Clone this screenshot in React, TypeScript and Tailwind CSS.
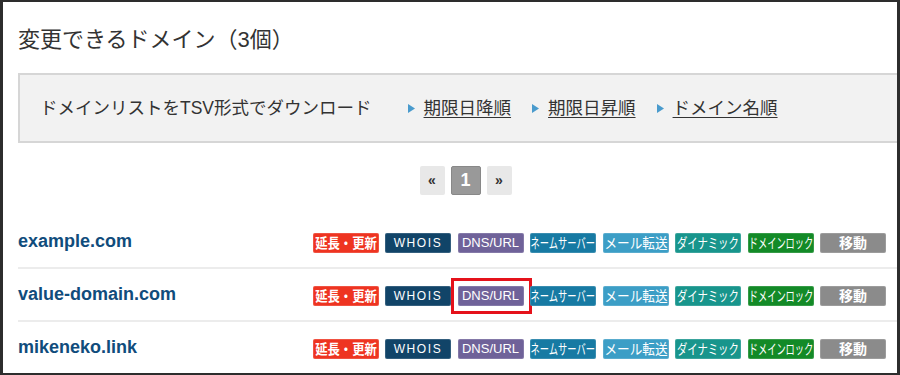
const FONT = '"Liberation Sans", "Noto Sans CJK JP", sans-serif';

type Badge = { label: string; bg: string; text: string };

const badges: Badge[] = [
  { label: '延長・更新', bg: 'bg-[#ee3421]', text: 'text-[14px] font-bold scale-x-[0.88]' },
  { label: 'WHOIS', bg: 'bg-[#114468]', text: 'text-[12px] tracking-[1.6px]' },
  { label: 'DNS/URL', bg: 'bg-[#6f6299]', text: 'text-[13px]' },
  { label: 'ネームサーバー', bg: 'bg-[#177aa3]', text: 'text-[14px] scale-x-[0.66]' },
  { label: 'メール転送', bg: 'bg-[#3c9ec6]', text: 'text-[14px] scale-x-[0.9]' },
  { label: 'ダイナミック', bg: 'bg-[#18958c]', text: 'text-[14px] scale-x-[0.74]' },
  { label: 'ドメインロック', bg: 'bg-[#138a27]', text: 'text-[14px] scale-x-[0.66]' },
  { label: '移動', bg: 'bg-[#8b8b8b]', text: 'text-[14px] font-bold' },
];

const domains = ['example.com', 'value-domain.com', 'mikeneko.link'];

function Triangle() {
  return (
    <svg width="7" height="9" viewBox="0 0 7 9" className="shrink-0">
      <polygon points="0,0 7,4.5 0,9" fill="#4a9bcd" />
    </svg>
  );
}

function SortLink({ label, first }: { label: string; first?: boolean }) {
  return (
    <div className={`flex items-center gap-[9px] ${first ? 'ml-[36px]' : 'ml-[21px]'}`}>
      <Triangle />
      <a className="text-[17.5px] text-[#333] underline underline-offset-[3px] whitespace-nowrap">{label}</a>
    </div>
  );
}

function DomainBadge({ badge, highlight }: { badge: Badge; highlight?: boolean }) {
  return (
    <div className="relative">
      <div
        className={`w-[66px] h-[20px] rounded-[2px] ${badge.bg} ring-1 ring-inset ring-white/15 flex items-center justify-center overflow-visible`}
      >
        <span className={`inline-block whitespace-nowrap text-white leading-none ${badge.text}`}>{badge.label}</span>
      </div>
      {highlight && (
        <div className="absolute -left-[7px] -right-[8px] -top-[8px] -bottom-[8px] border-[3px] border-[#e5121b]" />
      )}
    </div>
  );
}

function DomainRow({ name, highlightDns }: { name: string; highlightDns?: boolean }) {
  return (
    <div className="h-[53px] border-b-2 border-[#ececec] flex items-center justify-between pr-[27px]">
      <a className="text-[18px] font-bold text-[#104c7c]">{name}</a>
      <div className="flex items-center gap-[6.5px] pt-[2px]">
        {badges.map((b) => (
          <DomainBadge key={b.label} badge={b} highlight={highlightDns && b.label === 'DNS/URL'} />
        ))}
      </div>
    </div>
  );
}

export default function App() {
  return (
    <div
      className="w-[900px] h-[375px] overflow-hidden bg-white border-[#2d2d2d] border-t-2 border-l-[3px] border-r-[3px] border-b-2"
      style={{ fontFamily: FONT }}
    >
      <div className="w-[895px] ml-[15px]">
        {/* Title */}
        <h2 className="pt-[23px] text-[22px] leading-[30px] text-[#333] whitespace-nowrap">変更できるドメイン（3個）</h2>

        {/* Download bar */}
        <div className="mt-[18px] h-[70px] border-2 border-[#d6d6d6] bg-[#f2f2f2] flex items-center pl-[20px]">
          <span className="text-[17.5px] text-[#333] whitespace-nowrap">ドメインリストをTSV形式でダウンロード</span>
          <SortLink label="期限日降順" first />
          <SortLink label="期限日昇順" />
          <SortLink label="ドメイン名順" />
        </div>

        {/* Pagination */}
        <div className="mt-[23px] flex justify-center gap-[6px]">
          <button className="w-[25px] h-[29px] rounded-[2px] bg-[#e8e8e8] text-[14px] font-bold text-[#333] flex items-center justify-center">
            «
          </button>
          <button className="w-[30px] h-[29px] rounded-[2px] bg-[#999] border border-[#888] text-[18px] font-bold text-white flex items-center justify-center">
            1
          </button>
          <button className="w-[25px] h-[29px] rounded-[2px] bg-[#e8e8e8] text-[14px] font-bold text-[#333] flex items-center justify-center">
            »
          </button>
        </div>

        {/* Domain rows */}
        <div className="mt-[21px]">
          {domains.map((d, i) => (
            <DomainRow key={d} name={d} highlightDns={i === 1} />
          ))}
        </div>
      </div>
    </div>
  );
}
